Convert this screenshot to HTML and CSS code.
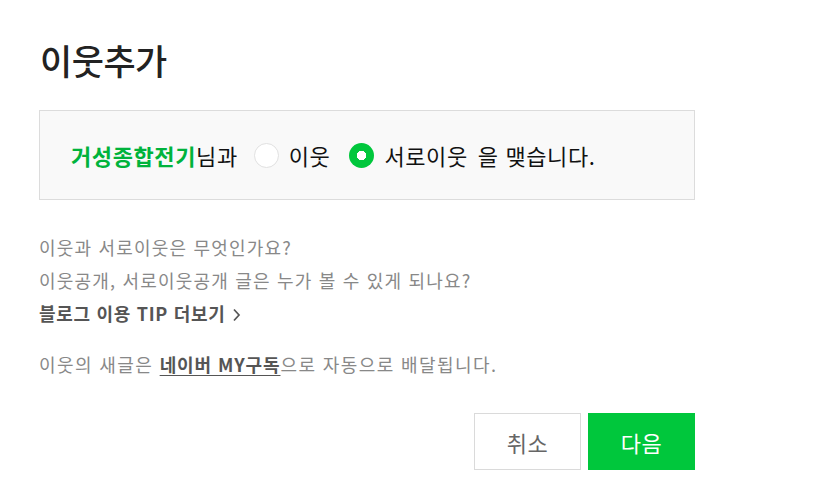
FILE: index.html
```
<!DOCTYPE html>
<html lang="ko">
<head>
<meta charset="utf-8">
<link rel="stylesheet" href="styles.css">
</head>
<body>
<div class="dialog">
  <h1 class="title">이웃추가</h1>
  <div class="choice">
    <span class="name">거성종합전기</span><span class="suffix">님과</span>
    <label class="opt first"><span class="radio"></span><span>이웃</span></label>
    <label class="opt"><span class="radio on"></span><span>서로이웃</span></label>
    <span class="tail">을 맺습니다.</span>
  </div>
  <div class="help">
    <p class="q">이웃과 서로이웃은 무엇인가요?</p>
    <p class="q">이웃공개, 서로이웃공개 글은 누가 볼 수 있게 되나요?</p>
    <p class="tip">블로그 이용 TIP 더보기 <svg class="chev" width="9" height="14" viewBox="0 0 9 14"><path d="M2 1.5 L7 7 L2 12.5" fill="none" stroke="#555" stroke-width="1.7"/></svg></p>
  </div>
  <p class="notice">이웃의 새글은 <a class="link">네이버 MY구독</a>으로 자동으로 배달됩니다.</p>
  <div class="buttons">
    <button class="btn cancel">취소</button>
    <button class="btn next">다음</button>
  </div>
</div>
</body>
</html>
```
FILE: styles.css
```
html, body {
  margin: 0;
  padding: 0;
  background: #fff;
}
body {
  font-family: "Noto Sans CJK KR", "Noto Sans", sans-serif;
  color: #222;
}
.dialog {
  width: 656px;
  padding: 30px 0 0 39px;
}
.title {
  margin: 0;
  font-size: 35px;
  font-weight: 500;
  line-height: 60px;
  letter-spacing: -0.5px;
  color: #222;
  padding-left: 1px;
}
.choice {
  margin-top: 20px;
  height: 88px;
  border: 1px solid #dcdcdc;
  background: #f9f9f9;
  display: flex;
  align-items: center;
  padding-left: 31px;
  font-size: 22px;
  letter-spacing: 0.6px;
  color: #111;
}
.name {
  color: #00b33c;
  font-weight: 700;
}
.suffix {
  margin-right: 16px;
}
.opt {
  display: flex;
  align-items: center;
  gap: 10px;
  margin-right: 10px;
}
.opt.first {
  margin-right: 19px;
}
.radio {
  width: 23px;
  height: 23px;
  border-radius: 50%;
  border: 1px solid #e1e1e1;
  background: #fff;
  box-sizing: content-box;
}
.radio.on {
  width: 25px;
  height: 25px;
  border: none;
  background: radial-gradient(circle, #fff 0 4.5px, #00c73c 5px);
}
.help {
  margin-top: 31px;
  font-size: 18px;
  color: #888;
  letter-spacing: 1.2px;
}
.help p {
  margin: 0;
  line-height: 33px;
}
.tip {
  color: #555;
  font-weight: 700;
  letter-spacing: 0.7px;
}
.chev {
  vertical-align: -1px;
  margin-left: 1px;
}
.notice {
  margin: 20px 0 0;
  font-size: 18px;
  line-height: 28px;
  color: #888;
  letter-spacing: 1.4px;
}
.link {
  color: #555;
  font-weight: 700;
  letter-spacing: 0.9px;
  text-decoration: underline;
  text-underline-offset: 3px;
}
.buttons {
  margin-top: 35px;
  display: flex;
  justify-content: flex-end;
  gap: 7px;
}
.btn {
  width: 107px;
  height: 57px;
  font-family: inherit;
  font-size: 22px;
  letter-spacing: 0.5px;
  border-radius: 0;
  cursor: pointer;
}
.cancel {
  background: #fff;
  border: 1px solid #dadada;
  color: #666;
}
.next {
  background: #00c73c;
  border: none;
  color: #fff;
}
```
